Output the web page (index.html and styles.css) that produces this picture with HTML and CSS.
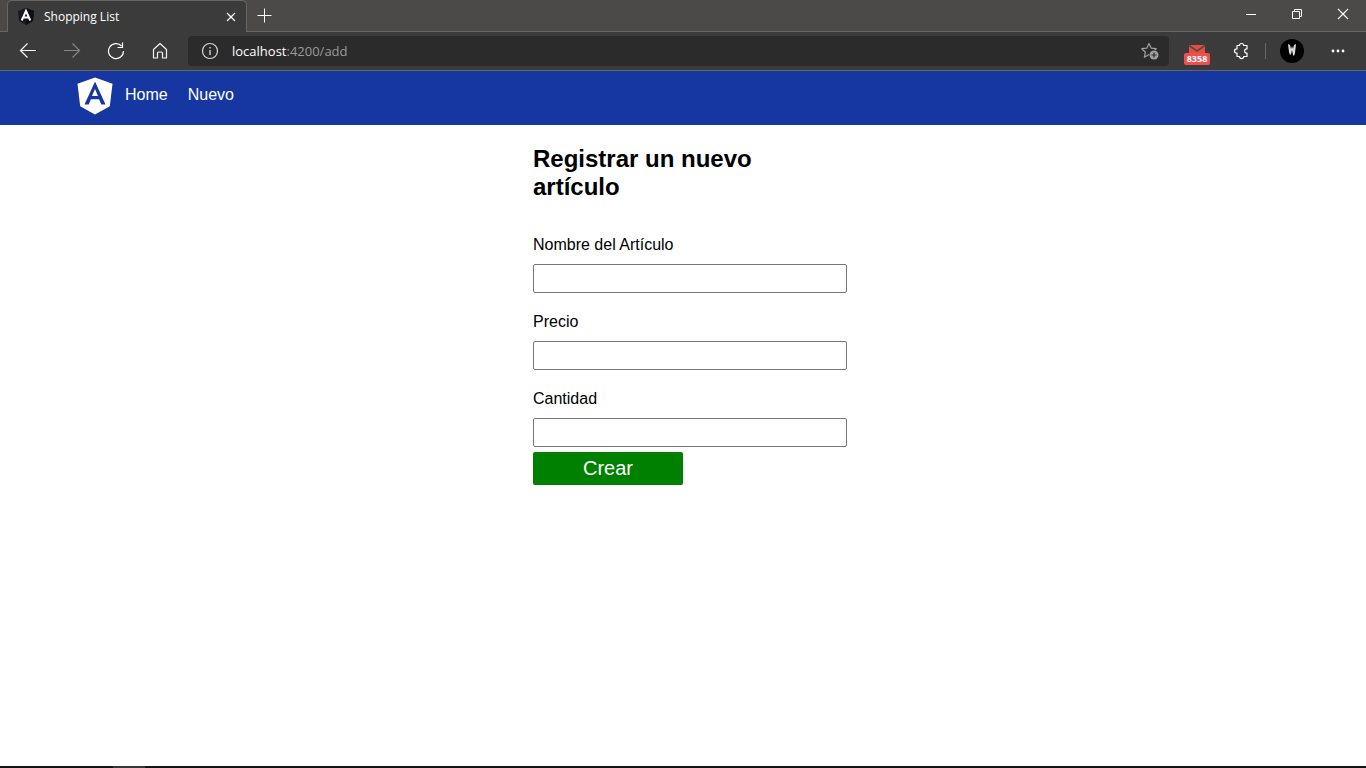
FILE: index.html
```html
<!DOCTYPE html>
<html lang="es">
<head>
<meta charset="utf-8">
<title>Shopping List</title>
<link rel="stylesheet" href="styles.css">
</head>
<body>
<div class="window">
  <div class="titlebar">
    <div class="tab">
      <svg class="icon" width="16" height="17" viewBox="0 0 16 17"><path fill="#151a24" d="M8 0l8 3-1 10-7 4-7-4L0 3z"/><path fill="#0b0f17" d="M8 0l8 3-1 10-7 4z"/><path fill="none" stroke="#fff" stroke-width="2" d="M3.700 12.500L8 3l4.300 9.500M5.500 9.500h5"/></svg>
      <span class="tab-title">Shopping List</span>
      <button class="tab-close" aria-label="Cerrar pestaña"><svg class="icon" width="10" height="10" viewBox="0 0 10 10"><path fill="none" stroke="#fff" stroke-width="1.300" d="M1 1l8 8M9 1L1 9"/></svg></button>
    </div>
    <button class="new-tab" aria-label="Nueva pestaña"><svg class="icon" width="15" height="15" viewBox="0 0 15 15"><path fill="none" stroke="#fff" d="M7.500 0.500v14M0.500 7.500h14"/></svg></button>
    <div class="window-controls">
      <button class="control" aria-label="Minimizar"><svg class="icon" width="12" height="12" viewBox="0 0 12 12"><path stroke="#fff" d="M1 6.500h10"/></svg></button>
      <button class="control" aria-label="Restaurar"><svg class="icon" width="12" height="12" viewBox="0 0 12 12"><path fill="none" stroke="#fff" d="M1.500 3.500h7v7h-7zM3.500 3.500v-2h7v7h-2"/></svg></button>
      <button class="control" aria-label="Cerrar"><svg class="icon" width="12" height="12" viewBox="0 0 12 12"><path fill="none" stroke="#fff" stroke-width="1.200" d="M1 1l10 10M11 1L1 11"/></svg></button>
    </div>
  </div>

  <div class="toolbar">
    <button class="tool" aria-label="Atrás"><svg class="icon" width="18" height="16" viewBox="0 0 18 16"><path fill="none" stroke="#fff" stroke-width="1.200" d="M17 7.500H1.500M8.500 .5l-7 7 7 7"/></svg></button>
    <button class="tool" aria-label="Adelante"><svg class="icon" width="18" height="16" viewBox="0 0 18 16"><path fill="none" stroke="#858585" stroke-width="1.200" d="M1 7.500h15.500M9.500 .5l7 7-7 7"/></svg></button>
    <button class="tool" aria-label="Actualizar"><svg class="icon" width="18" height="18" viewBox="0 0 18 18"><path fill="none" stroke="#fff" stroke-width="1.200" d="M16.500 9A7.500 7.500 0 1 1 14.500 4M15.500 0.500v5h-5"/></svg></button>
    <button class="tool" aria-label="Inicio"><svg class="icon" width="16" height="18" viewBox="0 0 16 18"><path fill="none" stroke="#f2f2f2" stroke-width="1.200" stroke-linejoin="round" d="M1.500 7.500L8 1.500l6.500 6v8.500h-4v-5q0-1-1-1h-3q-1 0-1 1v5h-4z"/></svg></button>
    <div class="address">
      <svg class="icon" width="18" height="18" viewBox="0 0 18 18"><circle cx="9" cy="9" r="7.500" fill="none" stroke="#d8d8d8" stroke-width="1.200"/><path stroke="#c8c8c8" stroke-width="1.500" d="M9 8v5M9 5v1.500"/></svg>
      <span class="url"><span class="host">localhost</span>:4200/add</span>
      <button class="favorite" aria-label="Agregar a favoritos"><svg class="icon" width="18" height="18" viewBox="0 0 18 18"><path fill="none" stroke="#a0a0a0" stroke-width="1.200" stroke-linejoin="round" d="M8 1.500l2.100 4.600 5.100.6-3.700 3.500 1 5L8 12.500l-4.600 2.700 1-5L.8 6.700l5.100-.6z"/><circle cx="13" cy="13" r="5.200" fill="#2b2b2b"/><circle cx="13" cy="13" r="4.500" fill="#a0a0a0"/><path stroke="#2b2b2b" stroke-width="1.200" d="M13 10.500v5M10.500 13h5"/></svg></button>
    </div>
    <button class="tool mail" aria-label="Correo"><svg class="icon" width="16" height="12" viewBox="0 0 16 12"><path fill="#e44e42" d="M0 0h16v12H0z"/><path fill="none" stroke="#5a4744" stroke-width="1.600" d="M0 .5l8 5.500L16 .5"/></svg><span class="badge">8358</span></button>
    <button class="tool" aria-label="Extensiones"><svg class="icon" width="16" height="18" viewBox="0 0 16 18"><path fill="none" stroke="#fff" stroke-width="1.200" stroke-linejoin="round" d="M4 3.500h2.500C6.500 .8 10.700.8 10.700 3.500h3.300v3.500c-3.200-.6-3.200 4.600 0 4v3.500h-3.300c0 2.700-4.200 2.700-4.200 0H4v-3.400C.6 11.100.6 6.900 4 6.900z"/></svg></button>
    <span class="divider"></span>
    <button class="avatar" aria-label="Perfil"><svg class="icon" width="24" height="24" viewBox="0 0 24 24"><circle cx="12" cy="12" r="12" fill="#000"/><path fill="#ddd" d="M8 5l2 1 1 4 1-3 1 3 1-4 2-1-1 9-1 3-1-1-1-5-1 4-1 1-1-3z"/></svg></button>
    <button class="tool" aria-label="Configuración y más"><svg class="icon" width="14" height="4" viewBox="0 0 14 4"><g fill="#fff"><circle cx="2" cy="2" r="1.400"/><circle cx="7" cy="2" r="1.400"/><circle cx="12" cy="2" r="1.400"/></g></svg></button>
  </div>

  <nav class="navbar">
    <a class="brand" href="#" aria-label="Angular"><svg class="icon" width="36" height="38" viewBox="0 0 36 38"><path fill="#fff" d="M18 .5l17.500 6.300-2.700 22.400L18 37.500 3.200 29.200 .5 6.800z"/><path fill="#1637a2" fill-rule="evenodd" d="M18 4.500L28.500 27.500h-4.200l-2.200-5.300h-8.200L11.700 27.500H7.500zM18 12l-3 7h6z"/></svg></a>
    <a class="nav-link" href="#">Home</a>
    <a class="nav-link" href="#">Nuevo</a>
  </nav>

  <main class="page">
    <form class="form">
      <h2 class="heading">Registrar un nuevo artículo</h2>
      <div class="fields">
        <div class="field"><label class="label" for="nombre">Nombre del Artículo</label><input class="input" id="nombre" type="text"></div>
        <div class="field"><label class="label" for="precio">Precio</label><input class="input" id="precio" type="text"></div>
        <div class="field"><label class="label" for="cantidad">Cantidad</label><input class="input" id="cantidad" type="text"></div>
      </div>
      <button class="submit" type="button">Crear</button>
    </form>
  </main>
  <div class="taskbar"><span class="taskbar-item"></span></div>
</div>
</body>
</html>
```
FILE: styles.css
```css
* {
  box-sizing: border-box;
}

body {
  margin: 0;
  font-family: "Liberation Sans", Arial, sans-serif;
  font-size: 16px;
  color: #000;
  background: #fff;
}

button {
  padding: 0;
  border: 0;
  background: none;
  font-family: inherit;
}

.icon {
  display: block;
  flex: none;
}

.window {
  display: flex;
  flex-direction: column;
  min-height: 100vh;
}

.titlebar {
  display: flex;
  height: 32px;
  padding-left: 7px;
  background: #4c4a48;
  box-shadow: inset 0 -1px #686663;
  font-family: "Open Sans", "Noto Sans", sans-serif;
}

.tab {
  display: flex;
  align-items: center;
  width: 240px;
  padding: 0 10px;
  border: 1px solid #686663;
  border-bottom: 0;
  border-radius: 5px 5px 0 0;
  background: #3b3b3b;
  color: #fff;
  font-size: 12px;
}

.tab-title {
  flex: 1;
  padding-left: 10px;
}

.tab-close,
.new-tab,
.control,
.tool {
  display: flex;
  align-items: center;
  justify-content: center;
}

.new-tab {
  width: 35px;
  height: 31px;
}

.window-controls {
  display: flex;
  margin-left: auto;
}

.control {
  width: 46px;
  height: 28px;
}

.toolbar {
  display: flex;
  align-items: center;
  height: 39px;
  padding: 0 6px;
  border-bottom: 1px solid #666;
  background: #3b3b3b;
  font-family: "Open Sans", "Noto Sans", sans-serif;
}

.tool {
  position: relative;
  flex: none;
  width: 44px;
  height: 30px;
}

.address {
  display: flex;
  flex: 1;
  align-items: center;
  height: 30px;
  margin: 0 6px;
  padding: 0 10px 0 13px;
  border-radius: 4px;
  background: #2b2b2b;
}

.url {
  flex: 1;
  padding-left: 13px;
  color: #9a9a9a;
  font-size: 13px;
}

.host {
  color: #fff;
}

.badge {
  position: absolute;
  top: 17px;
  left: 9px;
  width: 26px;
  height: 12px;
  border-radius: 2px;
  background: #ee5050;
  color: #fff;
  font-size: 9px;
  font-weight: 700;
  line-height: 12px;
  text-align: center;
}

.divider {
  width: 1px;
  height: 16px;
  margin: 0 14px 0 2px;
  background: #686868;
}

.avatar {
  margin-right: 12px;
}

.navbar {
  display: flex;
  gap: 20px;
  height: 54px;
  padding: 6px 77px;
  background: #1637a2;
}

.brand {
  margin-right: -8px;
}

.nav-link {
  padding-top: 9px;
  color: #fff;
  line-height: 18px;
  text-decoration: none;
}

.page {
  flex: 1;
}

.form {
  width: 300px;
  margin: 0 auto;
  padding-top: 20px;
}

.heading {
  margin: 0 0 35px;
  font-size: 24px;
  line-height: 28px;
}

.fields {
  display: grid;
  gap: 20px;
}

.label {
  display: block;
  margin-bottom: 10px;
  line-height: 18px;
}

.input {
  display: block;
  width: 314px;
  height: 29px;
  padding: 5px;
  border: 1px solid #767676;
  border-radius: 2px;
  background: #fff;
  font-size: 14px;
}

.submit {
  display: block;
  width: 150px;
  height: 33px;
  margin-top: 5px;
  border-radius: 2px;
  background: #008000;
  color: #fff;
  font-size: 20px;
}

.taskbar {
  height: 2px;
  padding-left: 113px;
  background: #171315;
}

.taskbar-item {
  display: block;
  width: 32px;
  height: 2px;
  background: #3a3739;
}
```
